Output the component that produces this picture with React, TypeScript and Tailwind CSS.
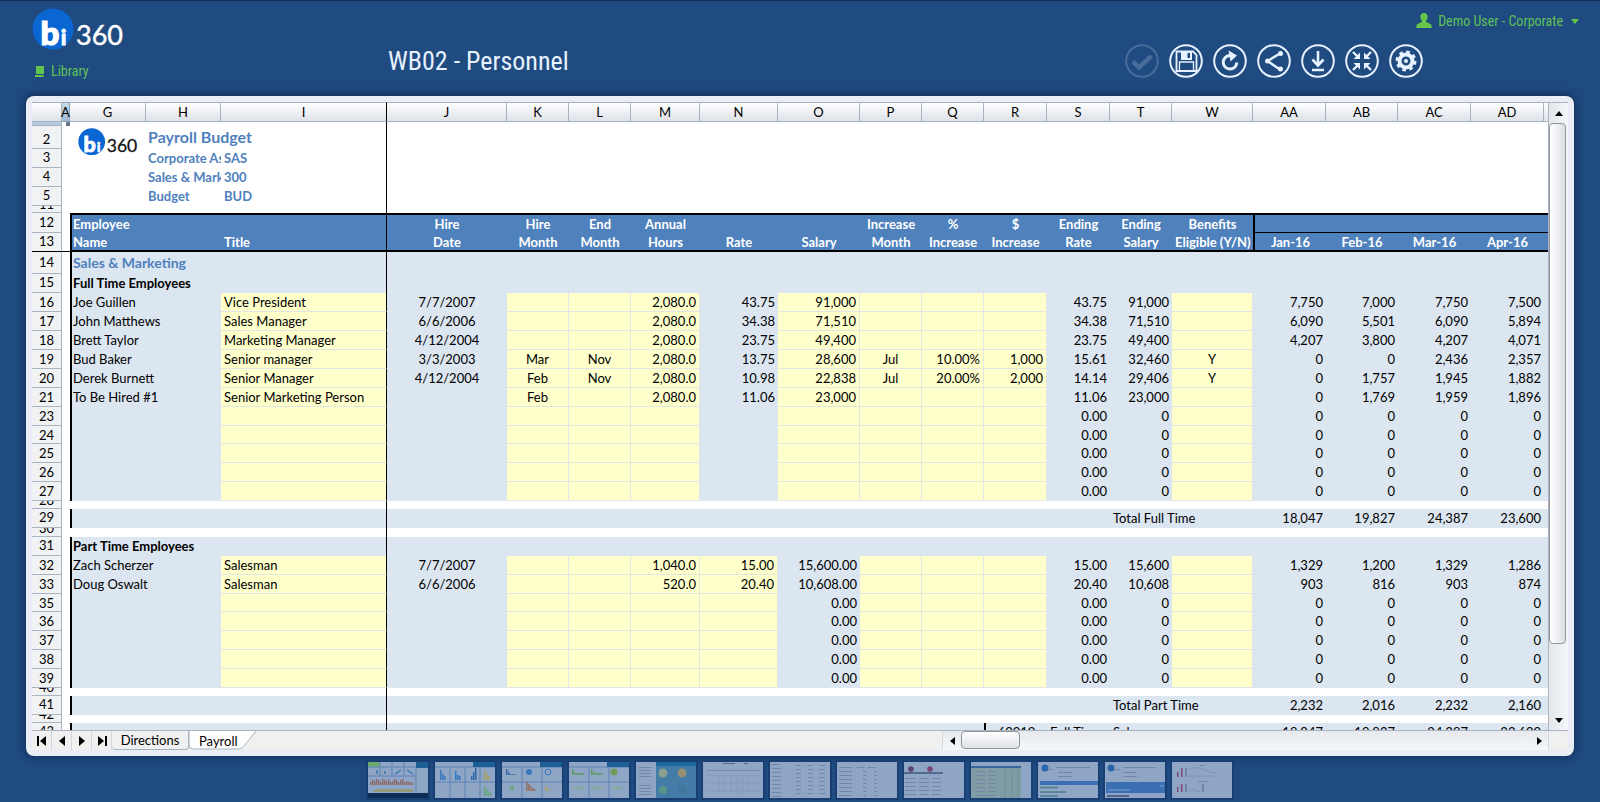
import React from 'react';
import clsx from 'clsx';

type Align = 'left' | 'center' | 'right';

interface Column {
  key: string;
  width: string;
  align: Align;
}

interface Employee {
  row: number;
  name?: string;
  cells: Record<string, string>;
}

const COLUMNS: Column[] = [
  { key: 'G', width: 'w-[76px]', align: 'left' },
  { key: 'H', width: 'w-[75px]', align: 'left' },
  { key: 'I', width: 'w-[166px]', align: 'left' },
  { key: 'J', width: 'w-[120px]', align: 'center' },
  { key: 'K', width: 'w-[62px]', align: 'center' },
  { key: 'L', width: 'w-[62px]', align: 'center' },
  { key: 'M', width: 'w-[69px]', align: 'right' },
  { key: 'N', width: 'w-[78px]', align: 'right' },
  { key: 'O', width: 'w-[82px]', align: 'right' },
  { key: 'P', width: 'w-[62px]', align: 'center' },
  { key: 'Q', width: 'w-[62px]', align: 'right' },
  { key: 'R', width: 'w-[63px]', align: 'right' },
  { key: 'S', width: 'w-[63px]', align: 'right' },
  { key: 'T', width: 'w-[62px]', align: 'right' },
  { key: 'W', width: 'w-[81px]', align: 'center' },
  { key: 'AA', width: 'w-[73px]', align: 'right' },
  { key: 'AB', width: 'w-[72px]', align: 'right' },
  { key: 'AC', width: 'w-[73px]', align: 'right' },
  { key: 'AD', width: 'w-[73px]', align: 'right' },
];

const HEADINGS: Record<string, [string, string]> = {
  G: ['Employee', 'Name'],
  I: ['', 'Title'],
  J: ['Hire', 'Date'],
  K: ['Hire', 'Month'],
  L: ['End', 'Month'],
  M: ['Annual', 'Hours'],
  N: ['', 'Rate'],
  O: ['', 'Salary'],
  P: ['Increase', 'Month'],
  Q: ['%', 'Increase'],
  R: ['$', 'Increase'],
  S: ['Ending', 'Rate'],
  T: ['Ending', 'Salary'],
  W: ['Benefits', 'Eligible (Y/N)'],
  AA: ['', 'Jan-16'],
  AB: ['', 'Feb-16'],
  AC: ['', 'Mar-16'],
  AD: ['', 'Apr-16'],
};

const zeros = { S: '0.00', T: '0', AA: '0', AB: '0', AC: '0', AD: '0' };
const partZeros = { ...zeros, O: '0.00' };

const FULL_TIME: Employee[] = [
  { row: 16, name: 'Joe Guillen', cells: { I: 'Vice President', J: '7/7/2007', M: '2,080.0', N: '43.75', O: '91,000', S: '43.75', T: '91,000', AA: '7,750', AB: '7,000', AC: '7,750', AD: '7,500' } },
  { row: 17, name: 'John Matthews', cells: { I: 'Sales Manager', J: '6/6/2006', M: '2,080.0', N: '34.38', O: '71,510', S: '34.38', T: '71,510', AA: '6,090', AB: '5,501', AC: '6,090', AD: '5,894' } },
  { row: 18, name: 'Brett Taylor', cells: { I: 'Marketing Manager', J: '4/12/2004', M: '2,080.0', N: '23.75', O: '49,400', S: '23.75', T: '49,400', AA: '4,207', AB: '3,800', AC: '4,207', AD: '4,071' } },
  { row: 19, name: 'Bud Baker', cells: { I: 'Senior manager', J: '3/3/2003', K: 'Mar', L: 'Nov', M: '2,080.0', N: '13.75', O: '28,600', P: 'Jul', Q: '10.00%', R: '1,000', S: '15.61', T: '32,460', W: 'Y', AA: '0', AB: '0', AC: '2,436', AD: '2,357' } },
  { row: 20, name: 'Derek Burnett', cells: { I: 'Senior Manager', J: '4/12/2004', K: 'Feb', L: 'Nov', M: '2,080.0', N: '10.98', O: '22,838', P: 'Jul', Q: '20.00%', R: '2,000', S: '14.14', T: '29,406', W: 'Y', AA: '0', AB: '1,757', AC: '1,945', AD: '1,882' } },
  { row: 21, name: 'To Be Hired #1', cells: { I: 'Senior Marketing Person', K: 'Feb', M: '2,080.0', N: '11.06', O: '23,000', S: '11.06', T: '23,000', AA: '0', AB: '1,769', AC: '1,959', AD: '1,896' } },
  { row: 23, cells: zeros },
  { row: 24, cells: zeros },
  { row: 25, cells: zeros },
  { row: 26, cells: zeros },
  { row: 27, cells: zeros },
];

const PART_TIME: Employee[] = [
  { row: 32, name: 'Zach Scherzer', cells: { I: 'Salesman', J: '7/7/2007', M: '1,040.0', N: '15.00', O: '15,600.00', S: '15.00', T: '15,600', AA: '1,329', AB: '1,200', AC: '1,329', AD: '1,286' } },
  { row: 33, name: 'Doug Oswalt', cells: { I: 'Salesman', J: '6/6/2006', M: '520.0', N: '20.40', O: '10,608.00', S: '20.40', T: '10,608', AA: '903', AB: '816', AC: '903', AD: '874' } },
  { row: 35, cells: partZeros },
  { row: 36, cells: partZeros },
  { row: 37, cells: partZeros },
  { row: 38, cells: partZeros },
  { row: 39, cells: partZeros },
];

const FULL_TIME_INPUTS = ['I', 'K', 'L', 'M', 'O', 'P', 'Q', 'R', 'W'];
const PART_TIME_INPUTS = ['I', 'K', 'L', 'M', 'N', 'P', 'Q', 'R', 'W'];
const SHORT_ROWS = [24, 35];

const ALIGN: Record<Align, string> = {
  left: 'text-left',
  center: 'text-center',
  right: 'text-right',
};

const Logo: React.FC<{ className: string; ink: string }> = ({ className, ink }) => (
  <svg viewBox="0 0 92 44" className={className} role="img" aria-label="bi360">
    <circle cx="21" cy="21" r="20.5" fill="#0a66d2" />
    <g fontFamily="Lato, sans-serif" fill="#fff" stroke="#fff" fontWeight="900">
      <text x="8.500" y="36.500" fontSize="33" strokeWidth="1.200">b</text>
      <text x="29" y="36.500" fontSize="20" strokeWidth="1">i</text>
    </g>
    <text x="44" y="36.500" fontSize="27" fontFamily="Lato, sans-serif" fill={ink} stroke={ink} strokeWidth="0.400">360</text>
  </svg>
);

interface CellProps {
  height?: string;
  span?: number;
  frozen?: boolean;
  className?: string;
  children?: React.ReactNode;
}

const Cell: React.FC<CellProps> = ({ height = 'h-[19px] leading-[19px]', span, frozen, className, children }) => (
  <td colSpan={span} className="p-0">
    <div className={clsx('overflow-hidden whitespace-nowrap px-[3px]', height, frozen && 'border-r border-r-black', className)}>
      {children}
    </div>
  </td>
);

interface RowHeadProps {
  n: number;
  height?: string;
  last?: boolean;
  collapsed?: boolean;
}

const RowHead: React.FC<RowHeadProps> = ({ n, height = 'h-[19px]', last, collapsed }) => (
  <>
    <th scope="row" className="p-0 font-normal text-black">
      <div
        className={clsx(
          'flex justify-center overflow-hidden border-r border-b border-r-[#a9b4c0] bg-[#f1f2f4]',
          last ? 'border-b-black' : 'border-b-[#a9b4c0]',
          collapsed ? 'items-end pb-px leading-none' : 'items-center',
          height,
        )}
      >
        {n}
      </div>
    </th>
    <td className="p-0">
      <div className={clsx('bg-white', height, last && 'border-b border-black')} />
    </td>
  </>
);

const GapRow: React.FC<{ n: number; height?: string }> = ({ n, height = 'h-2' }) => (
  <tr>
    <RowHead n={n} height={height} collapsed />
    <Cell span={3} height={height} frozen />
    <Cell span={17} height={height} />
  </tr>
);

const SectionRow: React.FC<{ n: number; height?: string; className?: string; label: string }> = ({
  n,
  height = 'h-[19px]',
  className,
  label,
}) => (
  <tr>
    <RowHead n={n} height={height} />
    <Cell span={3} height={height} frozen className="flex items-center border-l-2 border-l-black bg-[#dce6f1] pl-px">
      <span className={clsx('font-bold', className)}>{label}</span>
    </Cell>
    <Cell span={17} height={height} className="bg-[#dce6f1]" />
  </tr>
);

const EmployeeRow: React.FC<{ employee: Employee; inputs: string[] }> = ({ employee, inputs }) => {
  const height = SHORT_ROWS.includes(employee.row) ? 'h-[18px] leading-[18px]' : 'h-[19px] leading-[19px]';

  return (
    <tr>
      <RowHead n={employee.row} height={height} />
      <Cell span={2} height={height} className="border-l-2 border-black bg-[#dce6f1] pl-px">
        {employee.name}
      </Cell>
      {COLUMNS.slice(2).map(col => (
        <Cell
          key={col.key}
          height={height}
          frozen={col.key === 'I'}
          className={clsx(
            ALIGN[col.align],
            inputs.includes(col.key) ? 'border-b border-b-[#dfe6e4] bg-[#ffffcc]' : 'bg-[#dce6f1]',
            inputs.includes(col.key) && col.key !== 'I' && 'border-r border-r-[#dfe6e4]',
          )}
        >
          {employee.cells[col.key]}
        </Cell>
      ))}
      <Cell height={height} className="bg-[#dce6f1]" />
    </tr>
  );
};

const TotalRow: React.FC<{ n: number; label: string; values: string[] }> = ({ n, label, values }) => (
  <tr>
    <RowHead n={n} />
    <Cell span={3} frozen className="border-l-2 border-l-black bg-[#dce6f1]" />
    <Cell span={10} className="bg-[#dce6f1]" />
    <Cell span={2} className="bg-[#dce6f1]">{label}</Cell>
    {values.map((value, i) => (
      <Cell key={i} className="bg-[#dce6f1] text-right">{value}</Cell>
    ))}
    <Cell className="bg-[#dce6f1]" />
  </tr>
);

const TitleRow: React.FC<{ n: number; label: string; code: string }> = ({ n, label, code }) => (
  <tr className="font-bold text-[#4f81bd]">
    <RowHead n={n} />
    <Cell />
    <Cell className="pr-0 pl-[2px]">{label}</Cell>
    <Cell frozen>{code}</Cell>
    <Cell span={17} />
  </tr>
);

const Sheet: React.FC = () => (
  <table className="w-full table-fixed border-separate border-spacing-0 bg-white text-[13px] text-black">
    <colgroup>
      <col className="w-[30px]" />
      <col className="w-[8px]" />
      {COLUMNS.map(col => <col key={col.key} className={col.width} />)}
      <col />
    </colgroup>
    <thead>
      <tr>
        <th className="p-0">
          <div className="h-5 border-t border-r border-b border-[#a9b4c0] bg-linear-to-b from-white to-[#dde2e8]" />
        </th>
        <th scope="col" className="p-0 font-normal">
          <div className="flex h-5 justify-center border-t border-r border-b border-[#8ba5bd] bg-linear-to-b from-[#c9d9e8] to-[#9db9d2] leading-[19px]">A</div>
        </th>
        {COLUMNS.map(col => (
          <th key={col.key} scope="col" className="p-0 font-normal">
            <div
              className={clsx(
                'h-5 border-t border-r border-b border-t-[#a9b4c0] border-b-[#a9b4c0] bg-linear-to-b from-white to-[#dde2e8] leading-[19px]',
                col.key === 'I' ? 'border-r-black' : 'border-r-[#a9b4c0]',
              )}
            >
              {col.key}
            </div>
          </th>
        ))}
        <th className="p-0">
          <div className="h-5 border-t border-b border-[#a9b4c0] bg-linear-to-b from-white to-[#dde2e8]" />
        </th>
      </tr>
    </thead>
    <tbody>
      <tr>
        <td className="p-0"><div className="h-1 border-r border-b border-[#a9b4c0] bg-[#b4cade]" /></td>
        <td className="p-0">
          <div className="flex h-1 justify-end"><span className="size-1 bg-[#6b7785]" /></div>
        </td>
        <Cell span={3} height="h-1" frozen />
        <Cell span={17} height="h-1" />
      </tr>
      <tr>
        <RowHead n={2} height="h-[23px] pt-[5px]" />
        <td className="p-0">
          <div className="relative h-[23px]">
            <Logo className="absolute top-[2px] left-2 w-[60px]" ink="#111" />
          </div>
        </td>
        <Cell span={2} height="h-[23px] leading-[22px]" frozen className="pl-[2px] text-base font-bold text-[#4f81bd]">
          Payroll Budget
        </Cell>
        <Cell span={17} height="h-[23px]" />
      </tr>
      <TitleRow n={3} label="Corporate Assets" code="SAS" />
      <TitleRow n={4} label="Sales & Marketing" code="300" />
      <TitleRow n={5} label="Budget" code="BUD" />
      <GapRow n={11} height="h-[7px]" />
      {[0, 1].map(line => (
        <tr key={line} className="font-bold text-white">
          <RowHead n={12 + line} height={line === 0 ? 'h-5' : 'h-[19px]'} last={line === 1} />
          {COLUMNS.map(col => (
            <Cell
              key={col.key}
              height={line === 0 ? 'h-5 leading-[18px]' : 'h-[19px] leading-[19px]'}
              frozen={col.key === 'I'}
              className={clsx(
                'border-black bg-[#4f81bd]',
                line === 0 ? 'border-t-2' : 'border-b-2',
                col.key === 'G' && 'border-l-2 pl-px',
                col.key === 'AA' && 'border-l-2',
                line === 0 && col.key.startsWith('A') && 'border-b',
                !['G', 'H', 'I'].includes(col.key) && 'px-0 text-center',
              )}
            >
              {HEADINGS[col.key]?.[line]}
            </Cell>
          ))}
          <Cell
            height={line === 0 ? 'h-5' : 'h-[19px]'}
            className={clsx('border-black bg-[#4f81bd]', line === 0 ? 'border-t-2 border-b' : 'border-b-2')}
          />
        </tr>
      ))}
      <SectionRow n={14} height="h-[22px]" className="text-sm text-[#4f81bd]" label="Sales & Marketing" />
      <SectionRow n={15} label="Full Time Employees" />
      {FULL_TIME.map(employee => <EmployeeRow key={employee.row} employee={employee} inputs={FULL_TIME_INPUTS} />)}
      <GapRow n={28} />
      <TotalRow n={29} label="Total Full Time" values={['18,047', '19,827', '24,387', '23,600']} />
      <GapRow n={30} height="h-[9px]" />
      <SectionRow n={31} label="Part Time Employees" />
      {PART_TIME.map(employee => <EmployeeRow key={employee.row} employee={employee} inputs={PART_TIME_INPUTS} />)}
      <GapRow n={40} />
      <TotalRow n={41} label="Total Part Time" values={['2,232', '2,016', '2,232', '2,160']} />
      <GapRow n={42} />
      <tr>
        <RowHead n={43} />
        <Cell span={3} frozen className="border-l-2 border-l-black bg-[#dce6f1]" />
        <Cell span={8} className="bg-[#dce6f1]" />
        <Cell className="border-l-2 border-black bg-[#dce6f1] text-center">60010</Cell>
        <Cell span={3} className="bg-[#dce6f1]">Full Time - Salary</Cell>
        {['18,047', '19,827', '24,387', '23,600'].map(value => (
          <Cell key={value} className="bg-[#dce6f1] text-right">{value}</Cell>
        ))}
        <Cell className="bg-[#dce6f1]" />
      </tr>
    </tbody>
  </table>
);

const TOOLS: { label: string; icon: React.ReactNode; disabled?: boolean }[] = [
  {
    label: 'Approve',
    disabled: true,
    icon: <path d="M8 17.500l6 6L26.500 12" fill="none" strokeWidth="4.500" />,
  },
  {
    label: 'Save',
    icon: (
      <>
        <path d="M7.500 7.500h16.500l3.500 3.500v16h-20z" fill="none" strokeWidth="1.800" />
        <path d="M10.500 27V18h14v9" fill="none" strokeWidth="1.300" />
        <path d="M12 7h11v9H12z" stroke="none" />
        <path d="M18.500 9h2.500v5h-2.500z" fill="#214b80" stroke="none" />
      </>
    ),
  },
  {
    label: 'Refresh',
    icon: (
      <>
        <path d="M23.800 18.500a6.800 6.800 0 1 1-6.800-7h2" fill="none" strokeWidth="3" />
        <path d="M15.500 6.500l8.500 5-6.500 6z" stroke="none" />
      </>
    ),
  },
  {
    label: 'Share',
    icon: (
      <>
        <path d="M23 9.500L10.500 17 23 25.500" fill="none" strokeWidth="2.400" />
        <circle cx="23.500" cy="9.500" r="2.500" stroke="none" />
        <circle cx="10.500" cy="17" r="2.500" stroke="none" />
        <circle cx="23.500" cy="25" r="2.500" stroke="none" />
      </>
    ),
  },
  {
    label: 'Download',
    icon: <path d="M17 7v14M11.500 15.500L17 21.500l5.500-6M11 26h12" fill="none" strokeWidth="2.600" />,
  },
  {
    label: 'Collapse',
    icon: (
      <>
        <path d="M8 8l5 5M26 8l-5 5M8 26l5-5M26 26l-5-5" fill="none" strokeWidth="2.400" />
        <path d="M15 8.500V15H8.500zM19 8.500V15h6.500zM15 25.500V19H8.500zM19 25.500V19h6.500z" stroke="none" />
      </>
    ),
  },
  {
    label: 'Settings',
    icon: (
      <>
        <circle cx="17" cy="17" r="6.500" fill="none" strokeWidth="4" />
        <circle cx="17" cy="17" r="9" fill="none" strokeWidth="3" strokeDasharray="3.534 3.534" />
        <circle cx="17" cy="17" r="2" stroke="none" />
      </>
    ),
  },
];

const TopBar: React.FC = () => (
  <header className="flex h-[96px] shrink-0 justify-between border-t border-[#12305a] font-['Roboto_Condensed','Liberation_Sans_Narrow',sans-serif]">
    <div className="flex w-[388px] shrink-0 flex-col pl-8">
      <Logo className="mt-[7px] h-[44px] w-[92px]" ink="#fff" />
      <a href="#library" className="mt-2 ml-[3px] flex items-center gap-[6px] text-sm leading-[22px] text-[#5fc157]">
        <svg viewBox="0 0 10 11" className="h-[11px] w-[10px]" fill="#63c64a">
          <path d="M1 0h8v8H1zM0 9h8.500v2H0z" />
        </svg>
        Library
      </a>
    </div>
    <h1 className="mt-10 flex-1 text-[26px] leading-[40px] text-[#e6f2ff]">WB02 - Personnel</h1>
    <div className="flex w-[475px] shrink-0 flex-col pr-[21px]">
      <button type="button" className="mt-[9px] flex items-center gap-[6px] self-end text-sm leading-[22px] text-[#5fc157]">
        <svg viewBox="0 0 16 16" className="size-4" fill="#63c64a">
          <path d="M8 0c2.600 0 3.800 1.800 3.600 4.200C11.500 6 10.700 7 10 8c.2 1 .8 1.500 2 1.800 2.400.8 3.700 1.700 3.700 4.200V15H.3v-1c0-2.500 1.300-3.400 3.700-4.200C5.200 9.500 5.800 9 6 8 5.300 7 4.500 6 4.400 4.200 4.200 1.800 5.400 0 8 0z" />
        </svg>
        Demo User - Corporate
        <svg viewBox="0 0 8 5" className="ml-[2px] h-[5px] w-2" fill="#63c64a">
          <path d="M0 0h8L4 5z" />
        </svg>
      </button>
      <div className="mt-3 flex gap-[10px]">
        {TOOLS.map(tool => (
          <button key={tool.label} type="button" aria-label={tool.label} disabled={tool.disabled} className={clsx(tool.disabled && 'opacity-20')}>
            <svg viewBox="0 0 34 34" className="size-[34px]" fill="#e6f2ff" stroke="#e6f2ff">
              <circle cx="17" cy="17" r="15.800" fill="none" strokeWidth="2" />
              {tool.icon}
            </svg>
          </button>
        ))}
      </div>
    </div>
  </header>
);

const NAV_ARROWS = [
  { label: 'First sheet', d: 'M3 3h2v10H3zM12 3v10L6 8z' },
  { label: 'Previous sheet', d: 'M11 3v10L5 8z' },
  { label: 'Next sheet', d: 'M5 3v10l6-5z' },
  { label: 'Last sheet', d: 'M11 3h2v10h-2zM4 3v10l6-5z' },
];

const SheetTabs: React.FC = () => (
  <div className="flex h-5 shrink-0 border-t border-[#a9b4c0] bg-[#f0f0f0] text-[13px] text-black">
    <div className="flex flex-1">
      {NAV_ARROWS.map(arrow => (
        <button key={arrow.label} type="button" aria-label={arrow.label} className="flex w-5 items-center justify-center border-r border-[#d3d8de]">
          <svg viewBox="0 0 16 16" className="size-4" fill="#000"><path d={arrow.d} /></svg>
        </button>
      ))}
      <button type="button" className="w-[77px] rounded-b-sm border-r border-b border-[#a9b4c0] text-center leading-[18px]">Directions</button>
      <button type="button" className="relative h-[19px] w-[67px] pl-[10px] text-left leading-[18px]">
        <svg viewBox="0 0 67 19" className="absolute inset-0 h-[19px] w-[67px]">
          <path d="M0 0v14q0 4 4 4h46q3 0 5-3L67 0" fill="#fff" stroke="#a9b4c0" />
        </svg>
        <span className="relative">Payroll</span>
      </button>
    </div>
    <div className="flex w-[606px] items-stretch border-l border-[#d3d8de] bg-linear-to-b from-[#e6e9ed] to-[#f6f8f9]">
      <button type="button" aria-label="Scroll left" className="flex w-[18px] items-center justify-center">
        <svg viewBox="0 0 5 8" className="h-2 w-[5px]"><path d="M5 0v8L0 4z" /></svg>
      </button>
      <div className="h-[18px] w-[59px] rounded-sm border border-[#8e959d] bg-linear-to-b from-white to-[#dfe2e6]" />
      <div className="flex-1" />
      <button type="button" aria-label="Scroll right" className="flex w-[18px] items-center justify-center">
        <svg viewBox="0 0 5 8" className="h-2 w-[5px]"><path d="M0 0v8l5-4z" /></svg>
      </button>
    </div>
    <div className="w-5 border-l border-[#d3d8de]" />
  </div>
);

const VerticalScroll: React.FC = () => (
  <div className="flex w-5 shrink-0 flex-col border-t border-l border-[#a9b4c0] bg-linear-to-r from-[#e3e6ea] to-[#f4f6f8]">
    <button type="button" aria-label="Scroll up" className="flex h-5 shrink-0 items-center justify-center">
      <svg viewBox="0 0 8 5" className="h-[5px] w-2"><path d="M0 5h8L4 0z" /></svg>
    </button>
    <div className="mr-[2px] grow-[523] rounded-sm border border-[#8e959d] bg-linear-to-r from-white to-[#dcdfe4]" />
    <div className="grow-[67]" />
    <button type="button" aria-label="Scroll down" className="flex h-5 shrink-0 items-center justify-center">
      <svg viewBox="0 0 8 5" className="h-[5px] w-2"><path d="M0 0h8L4 5z" /></svg>
    </button>
  </div>
);

const bars = (x: number, base: number, heights: number[], fill: string) =>
  heights.map((h, i) => <rect key={`${x}-${base}-${i}`} x={x + i * 2} y={base - h} width="1.500" height={h} fill={fill} />);

const textLines = (x: number, y: number, count: number, step: number, width: number) =>
  Array.from({ length: count }, (_, i) => <rect key={`${x}-${y}-${i}`} x={x} y={y + i * step} width={width} height="1" fill="#7486a6" />);

const tiles = <path d="M0 5h60M0 20h60M15 5v31M30 5v31M45 5v31" stroke="#5c83b2" fill="none" />;
const wideTiles = <path d="M0 5h60M0 20h60M20 5v31M40 5v31" stroke="#5c83b2" fill="none" />;
const titleStrip = <path d="M38 0h22v5H38z" fill="#1c5f94" />;

const THUMBNAILS: { label: string; art: React.ReactNode }[] = [
  {
    label: 'Executive dashboard',
    art: (
      <>
        <path d="M0 0h12v5H0z" fill="#6da86c" />
        <path d="M48 0h12v6H48z" fill="#1c5f94" />
        <path d="M0 5h48M0 14h48M12 0v14M24 0v14M36 0v14M48 5v26" stroke="#5c83b2" fill="none" />
        <path d="M9 12V8M17 12V9M27 12l6-4M39 8l6 4" stroke="#3c76b0" strokeWidth="1.500" />
        {bars(2, 23, [3, 5, 4, 6, 5, 3, 6, 5, 4, 6, 3, 4, 6, 5, 3, 5, 6, 3, 4, 3, 3, 2], '#8d6a6c')}
        <path d="M9 27h36v3H4z" fill="#93997a" />
        <path d="M0 31h60v5H0z" fill="#0d2d55" />
      </>
    ),
  },
  {
    label: 'Sales dashboard',
    art: <>{tiles}{titleStrip}{bars(5, 18, [10, 6, 4], '#3577bd')}{bars(20, 18, [9, 5, 4], '#3577bd')}{bars(36, 18, [4, 8, 12], '#2e68a6')}{bars(49, 18, [9, 7, 4], '#a5a467')}{bars(49, 34, [10, 7, 5, 3], '#6ba679')}</>,
  },
  {
    label: 'Trend dashboard',
    art: (
      <>
        {wideTiles}{titleStrip}{bars(4, 13, [6, 3, 1, 1, 1], '#2e68a6')}
        <circle cx="27" cy="10" r="3" fill="#3577bd" />
        <circle cx="46" cy="10" r="3" fill="none" stroke="#3577bd" />
        {bars(8, 29, [5, 5], '#6ba679')}{bars(24, 29, [9, 7, 5, 3, 2], '#96705f')}{bars(43, 29, [5, 3, 1], '#a5a467')}
      </>
    ),
  },
  {
    label: 'KPI dashboard',
    art: (
      <>
        {wideTiles}{titleStrip}{bars(3, 13, [6, 3, 2, 2, 2, 2], '#5a9b6a')}{bars(22, 13, [6, 3, 2, 2, 2, 2], '#5a9b6a')}
        <circle cx="45" cy="10" r="3.500" fill="#6e9b55" />
        {bars(3, 28, [2, 3, 4, 3, 4, 3], '#85a99d')}{bars(22, 28, [2, 3, 4, 3, 4, 3], '#85a99d')}{bars(43, 28, [2, 3, 4, 3, 4], '#85a99d')}
      </>
    ),
  },
  {
    label: 'Gauge dashboard',
    art: (
      <>
        <path d="M20 0h40v36H20z" fill="#447ca8" />
        <path d="M20 0h40v4H20z" fill="#1c6a9c" />
        {textLines(3, 5, 4, 3, 12)}{textLines(3, 23, 4, 3, 12)}
        <circle cx="27" cy="11" r="4.500" fill="#8ba08c" /><circle cx="46" cy="11" r="4.500" fill="#978c74" />
        <circle cx="27" cy="28" r="4" fill="#5a9489" /><circle cx="46" cy="28" r="4" fill="#3e7799" />
      </>
    ),
  },
  { label: 'Detail report', art: <><path d="M20 1h12v1H20zM41 1h4v1h-4z" fill="#53678b" /><path d="M4 13h54M16 13v20M22 13v20M28 13v20M34 13v20M40 13v20M46 13v20M4 21h54M4 29h54" stroke="#7f93b4" strokeDasharray="1 1" />{textLines(4, 8, 1, 1, 52)}</> },
  { label: 'Balance sheet', art: <>{textLines(2, 2, 1, 1, 8)}{textLines(2, 6, 8, 4, 9)}{textLines(26, 3, 8, 4, 5)}{textLines(38, 3, 8, 4, 5)}{textLines(49, 3, 8, 4, 6)}</> },
  { label: 'Profit and loss', art: <>{textLines(2, 5, 8, 4, 13)}{textLines(20, 5, 1, 4, 8)}{textLines(26, 9, 7, 4, 3)}{textLines(37, 9, 7, 4, 3)}{textLines(31, 5, 1, 4, 7)}</> },
  {
    label: 'Variance report',
    art: (
      <>
        <circle cx="7" cy="7" r="2.800" fill="#5d4672" /><circle cx="26" cy="7" r="2.800" fill="#7b4672" />
        <path d="M0 10h39v2H0z" fill="#506a94" />
        {textLines(1, 16, 5, 4, 11)}{textLines(15, 16, 5, 4, 10)}{textLines(28, 16, 5, 4, 9)}
      </>
    ),
  },
  { label: 'Budget input', art: <><path d="M0 4h50v32H0z" fill="#809da5" /><path d="M0 4h50v2H0z" fill="#39679a" />{textLines(5, 9, 7, 4, 9)}{textLines(17, 9, 7, 4, 8)}<path d="M34 7v29M41 7v29M47 7v29" stroke="#718f98" /></> },
  {
    label: 'WB01 workbook',
    art: (
      <>
        <circle cx="7" cy="6" r="3.500" fill="#2965ac" />
        {textLines(11, 7, 1, 1, 4)}{textLines(18, 5, 1, 1, 34)}{textLines(20, 10, 2, 4, 14)}
        <path d="M2 19h58v4H2z" fill="#3a70b1" />
        <path d="M2 25.500h18M2 30h26M2 34h18" stroke="#4a7f8a" strokeWidth="1.500" />
      </>
    ),
  },
  {
    label: 'WB02 workbook',
    art: (
      <>
        <circle cx="6" cy="6" r="3.500" fill="#2965ac" />
        {textLines(10, 7, 1, 1, 5)}{textLines(18, 5, 1, 1, 32)}{textLines(18, 10, 2, 4, 14)}
        <path d="M1 20h59v11H1z" fill="#3a70b1" />
        <path d="M3 28h22M55 24h4" stroke="#7f9fcf" />
        <path d="M2 34h22" stroke="#3d5070" strokeWidth="1.500" />
      </>
    ),
  },
  {
    label: 'Chart report',
    art: (
      <>
        {bars(5, 15, [5, 0, 9], '#7c4a76')}{bars(5, 30, [5, 0, 8], '#7c4a76')}
        <path d="M14 6v9M14 22v8M31 22v8" stroke="#56709c" strokeWidth="1.200" />
        <path d="M17 7q8-3 16 1t12 2M17 14h26M17 29q3-3 7 0h7" stroke="#7f93b8" fill="none" />
        {textLines(28, 3, 1, 1, 5)}{textLines(26, 19, 1, 1, 9)}
      </>
    ),
  },
];

const Thumbnails: React.FC = () => (
  <nav aria-label="Reports" className="flex h-[46px] shrink-0 justify-center gap-[7px] pt-[6px]">
    {THUMBNAILS.map(thumb => (
      <button key={thumb.label} type="button" title={thumb.label} className="h-9 w-[60px] bg-[#8fa5c6] shadow-[0_0_0_2px_#183f74]">
        <svg viewBox="0 0 60 36" className="size-full" aria-hidden="true">{thumb.art}</svg>
      </button>
    ))}
  </nav>
);

const App: React.FC = () => {
  return (
    <div className="flex h-screen flex-col overflow-hidden bg-[#204b80] font-['Lato',sans-serif]">
      <TopBar />
      <main className="mx-[26px] flex min-h-0 flex-1 flex-col rounded-lg bg-[#e9eef4] p-[6px] shadow-[0_0_8px_2px_#12305a]">
        <div className="flex min-h-0 flex-1">
          <div className="min-w-0 flex-1 overflow-hidden">
            <Sheet />
          </div>
          <VerticalScroll />
        </div>
        <SheetTabs />
      </main>
      <Thumbnails />
    </div>
  );
};

export default App;
